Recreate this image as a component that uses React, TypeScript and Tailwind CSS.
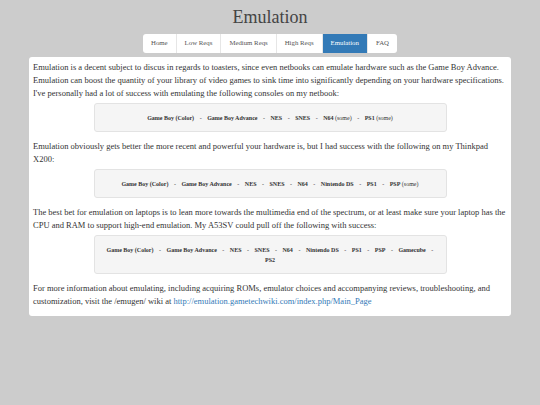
import React from "react"

const tabs = ["Home", "Low Reqs", "Medium Reqs", "High Reqs", "Emulation", "FAQ"]

type Item = { name: string; note?: string }

const netbook: Item[] = [
  { name: "Game Boy (Color)" },
  { name: "Game Boy Advance" },
  { name: "NES" },
  { name: "SNES" },
  { name: "N64", note: "(some)" },
  { name: "PS1", note: "(some)" },
]

const thinkpad: Item[] = [
  { name: "Game Boy (Color)" },
  { name: "Game Boy Advance" },
  { name: "NES" },
  { name: "SNES" },
  { name: "N64" },
  { name: "Nintendo DS" },
  { name: "PS1" },
  { name: "PSP", note: "(some)" },
]

const laptop: Item[] = [
  { name: "Game Boy (Color)" },
  { name: "Game Boy Advance" },
  { name: "NES" },
  { name: "SNES" },
  { name: "N64" },
  { name: "Nintendo DS" },
  { name: "PS1" },
  { name: "PSP" },
  { name: "Gamecube" },
  { name: "PS2" },
]

function Well({ items }: { items: Item[] }) {
  return (
    <div className="mx-auto mt-[3px] mb-[8px] w-[353px] rounded-[3px] border border-[#e3e3e3] bg-[#f5f5f5] px-[12px] py-[8.5px] text-center text-[6px] leading-[10px] text-[#333]">
      {items.map((item, i) => (
        <React.Fragment key={item.name}>
          <b>{item.name}</b>
          {item.note && <span> {item.note}</span>}
          {i < items.length - 1 && <span className="px-[4px]"> - </span>}
        </React.Fragment>
      ))}
    </div>
  )
}

export default function App() {
  return (
    <div
      className="min-h-[405px] bg-[#cccccc] pb-6 text-[#333]"
      style={{ fontFamily: '"Liberation Serif", "Times New Roman", serif' }}
    >
      {/* Header */}
      <h1 className="pt-[5px] text-center text-[18px] leading-[24px] text-[#444]">Emulation</h1>

      {/* Tabs */}
      <div className="mt-[5px] flex justify-center">
        <ul className="flex overflow-hidden rounded-[3px] bg-white text-[6.8px]">
          {tabs.map((t) => (
            <li
              key={t}
              className={`flex h-[19px] items-center border-r border-[#e6e6e6] px-[8px] last:border-r-0 ${
                t === "Emulation" ? "bg-[#337ab7] text-white" : "text-[#555]"
              }`}
            >
              {t}
            </li>
          ))}
        </ul>
      </div>

      {/* Content */}
      <div className="mx-[29px] mt-[4px] rounded-[3px] bg-white px-[4px] pt-[4px] pb-[8px] text-[8.5px] leading-[13px]">
        <p>
          Emulation is a decent subject to discus in regards to toasters, since even netbooks can emulate hardware such
          as the Game Boy Advance. Emulation can boost the quantity of your library of video games to sink time into
          significantly depending on your hardware specifications. I've personally had a lot of success with emulating
          the following consoles on my netbook:
        </p>
        <Well items={netbook} />
        <p>
          Emulation obviously gets better the more recent and powerful your hardware is, but I had success with the
          following on my Thinkpad X200:
        </p>
        <Well items={thinkpad} />
        <p>
          The best bet for emulation on laptops is to lean more towards the multimedia end of the spectrum, or at least
          make sure your laptop has the CPU and RAM to support high-end emulation. My A53SV could pull off the following
          with success:
        </p>
        <Well items={laptop} />
        <p>
          For more information about emulating, including acquiring ROMs, emulator choices and accompanying reviews,
          troubleshooting, and customization, visit the /emugen/ wiki at{" "}
          <a href="#" className="text-[#337ab7]">
            http://emulation.gametechwiki.com/index.php/Main_Page
          </a>
        </p>
      </div>
    </div>
  )
}
